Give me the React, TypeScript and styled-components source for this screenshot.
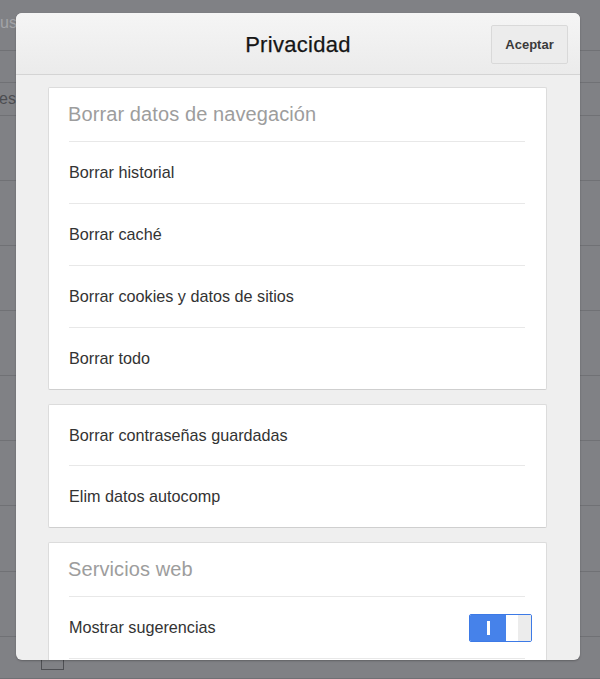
import styled, { createGlobalStyle } from 'styled-components';

const GlobalStyle = createGlobalStyle`
  html, body {
    margin: 0;
    padding: 0;
  }
  body {
    font-family: "Liberation Sans", Arial, sans-serif;
    background: #808185;
  }
  * {
    box-sizing: border-box;
  }
`;

const backdropRows = [51, 32, 33, 65, 65, 65, 65, 65, 65, 66, 65, 42];

const clearItems = [
  'Borrar historial',
  'Borrar caché',
  'Borrar cookies y datos de sitios',
  'Borrar todo',
];

const passwordItems = ['Borrar contraseñas guardadas', 'Elim datos autocomp'];

const App = () => {
  return (
    <>
      <GlobalStyle />
      <Screen>
        <Backdrop>
          {backdropRows.map((h, i) => (
            <BackdropRow key={i} style={{ height: h }}>
              {i === 0 && <FaintText>us</FaintText>}
              {i === 2 && <DimText>es</DimText>}
              {i === backdropRows.length - 1 && <CheckBox />}
            </BackdropRow>
          ))}
        </Backdrop>

        <Modal>
          <Header>
            <Spacer />
            <Title>Privacidad</Title>
            <AcceptButton type="button">Aceptar</AcceptButton>
          </Header>
          <Body>
            <Card>
              <CardTitle>Borrar datos de navegación</CardTitle>
              {clearItems.map(item => (
                <Row key={item}>
                  <RowInner>
                    <RowLabel>{item}</RowLabel>
                  </RowInner>
                </Row>
              ))}
            </Card>

            <Card>
              {passwordItems.map((item, i) => (
                <Row key={item} first={i === 0}>
                  <RowInner>
                    <RowLabel>{item}</RowLabel>
                  </RowInner>
                </Row>
              ))}
            </Card>

            <Card>
              <CardTitle>Servicios web</CardTitle>
              <Row>
                <RowInner>
                  <RowLabel>Mostrar sugerencias</RowLabel>
                  <Toggle>
                    <ToggleOn>
                      <OnMark />
                    </ToggleOn>
                    <ToggleKnob />
                  </Toggle>
                </RowInner>
              </Row>
              <Row>
                <RowInner />
              </Row>
            </Card>
          </Body>
        </Modal>
      </Screen>
    </>
  );
};

export default App;

const Screen = styled.div`
  position: relative;
  width: 600px;
  height: 679px;
  overflow: hidden;
  background: #808185;
`;

const Backdrop = styled.div`
  display: flex;
  flex-direction: column;
`;

const BackdropRow = styled.div`
  display: flex;
  align-items: center;
  flex-shrink: 0;
  border-bottom: 1px solid #707175;
  font-size: 16px;
`;

const FaintText = styled.span`
  margin-left: 0;
  margin-top: -4px;
  color: #a3a4a8;
`;

const DimText = styled.span`
  margin-left: -1px;
  color: #4c4d51;
`;

const CheckBox = styled.span`
  align-self: flex-start;
  margin: 9px 0 0 41px;
  width: 23px;
  height: 24px;
  border: 1px solid #4e4f53;
`;

const Modal = styled.div`
  position: absolute;
  left: 16px;
  top: 13px;
  width: 564px;
  height: 647px;
  display: flex;
  flex-direction: column;
  background: #efefef;
  border-radius: 6px;
  overflow: hidden;
  box-shadow: 0 1px 2px rgba(0, 0, 0, 0.25);
`;

const Header = styled.div`
  flex-shrink: 0;
  height: 62px;
  display: flex;
  align-items: center;
  padding: 0 12px;
  background: linear-gradient(#f5f5f5, #ebebeb);
  border-bottom: 1px solid #d4d4d4;
`;

const Spacer = styled.div`
  width: 77px;
`;

const Title = styled.h1`
  flex: 1;
  margin: 2px 0 0;
  text-align: center;
  font-size: 22px;
  font-weight: normal;
  color: #161616;
  letter-spacing: 0.3px;
  -webkit-text-stroke: 0.25px #161616;
`;

const AcceptButton = styled.button`
  width: 77px;
  height: 39px;
  margin-top: 1px;
  padding: 0;
  font-family: inherit;
  font-size: 13px;
  font-weight: bold;
  color: #3a3a3a;
  background: #ececec;
  border: 1px solid #d9d9d9;
  border-radius: 2px;
`;

const Body = styled.div`
  flex: 1;
  display: flex;
  flex-direction: column;
  gap: 14px;
  padding: 12px 33px 0 32px;
`;

const Card = styled.div`
  flex-shrink: 0;
  background: #fff;
  border: 1px solid #dcdcdc;
  border-bottom-color: #cfcfcf;
  border-radius: 2px;
`;

const CardTitle = styled.div`
  height: 53px;
  padding: 0 19px;
  display: flex;
  align-items: center;
  font-size: 20px;
  color: #9d9d9d;
  letter-spacing: 0.1px;
`;

const Row = styled.div<{ first?: boolean }>`
  padding: 0 21px 0 20px;
  & > div {
    height: ${props => (props.first ? '60px' : '62px')};
    border-top: ${props => (props.first ? 'none' : '1px solid #e8e8e8')};
  }
`;

const RowInner = styled.div`
  display: flex;
  align-items: center;
  justify-content: space-between;
`;

const RowLabel = styled.span`
  font-size: 16.2px;
  color: #333;
`;

const Toggle = styled.div`
  display: flex;
  width: 63px;
  height: 28px;
  margin-right: -7px;
  border: 1px solid #3d7ae6;
  border-radius: 2px;
  overflow: hidden;
`;

const ToggleOn = styled.div`
  width: 36px;
  display: flex;
  align-items: center;
  justify-content: center;
  background: #4682ea;
`;

const OnMark = styled.span`
  width: 3px;
  height: 14px;
  margin-left: 1px;
  background: #fff;
`;

const ToggleKnob = styled.div`
  flex: 1;
  background: linear-gradient(90deg, #fff 0 48%, #ececec 48% 100%);
`;
